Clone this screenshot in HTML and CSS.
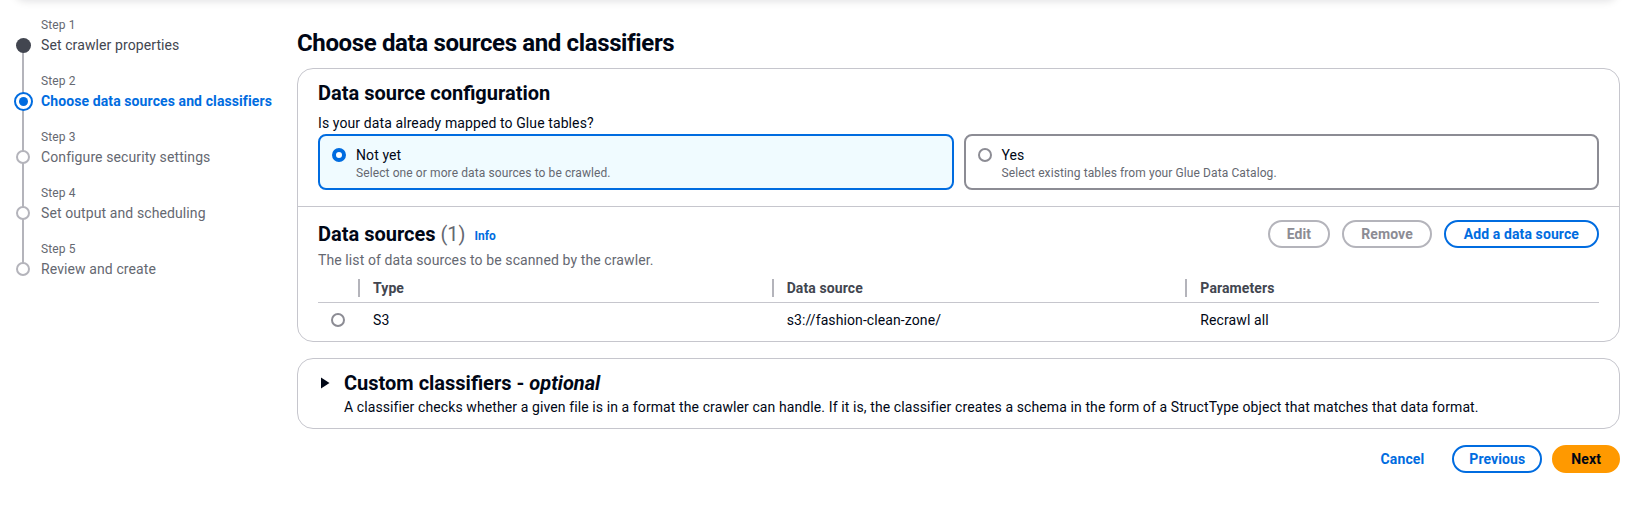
FILE: index.html
```html
<!DOCTYPE html>
<html lang="en">
<head>
<meta charset="utf-8">
<title>Choose data sources and classifiers</title>
<link rel="stylesheet" href="styles.css">
</head>
<body>
<div class="topbar"></div>
<div class="layout">
  <nav class="steps">
    <div class="step step-first">
      <div class="marker"><span class="dot dot-done"></span></div>
      <div class="step-label">Step 1</div>
      <div class="step-title title-done">Set crawler properties</div>
    </div>
    <div class="step">
      <div class="marker"><span class="dot dot-active"><span class="dot-inner"></span></span></div>
      <div class="step-label">Step 2</div>
      <div class="step-title title-active">Choose data sources and classifiers</div>
    </div>
    <div class="step">
      <div class="marker"><span class="dot dot-todo"></span></div>
      <div class="step-label">Step 3</div>
      <div class="step-title">Configure security settings</div>
    </div>
    <div class="step">
      <div class="marker"><span class="dot dot-todo"></span></div>
      <div class="step-label">Step 4</div>
      <div class="step-title">Set output and scheduling</div>
    </div>
    <div class="step step-last">
      <div class="marker"><span class="dot dot-todo"></span></div>
      <div class="step-label">Step 5</div>
      <div class="step-title">Review and create</div>
    </div>
  </nav>

  <main class="main">
    <h1 class="page-title">Choose data sources and classifiers</h1>

    <section class="container">
      <div class="cfg">
        <h2 class="h2">Data source configuration</h2>
        <div class="question">Is your data already mapped to Glue tables?</div>
        <div class="tiles">
          <div class="tile tile-selected">
            <span class="radio radio-on"></span>
            <div class="tile-text">
              <div class="tile-label">Not yet</div>
              <div class="tile-desc">Select one or more data sources to be crawled.</div>
            </div>
          </div>
          <div class="tile">
            <span class="radio"></span>
            <div class="tile-text">
              <div class="tile-label">Yes</div>
              <div class="tile-desc">Select existing tables from your Glue Data Catalog.</div>
            </div>
          </div>
        </div>
      </div>

      <div class="sources">
        <div class="src-head">
          <h2 class="h2">Data sources <span class="count">(1)</span> <a class="info">Info</a></h2>
          <div class="actions">
            <button class="btn btn-disabled">Edit</button>
            <button class="btn btn-disabled">Remove</button>
            <button class="btn btn-normal btn-wide">Add a data source</button>
          </div>
        </div>
        <div class="src-desc">The list of data sources to be scanned by the crawler.</div>
        <div class="table">
          <div class="thead">
            <div class="th th-sel"></div>
            <div class="th">Type</div>
            <div class="th">Data source</div>
            <div class="th">Parameters</div>
          </div>
          <div class="tr">
            <div class="td td-sel"><span class="radio"></span></div>
            <div class="td">S3</div>
            <div class="td">s3://fashion-clean-zone/</div>
            <div class="td">Recrawl all</div>
          </div>
        </div>
      </div>
    </section>

    <section class="container expander">
      <svg class="caret" width="16" height="24" viewBox="0 0 16 24" aria-hidden="true"><polygon points="3,6.5 11.5,12 3,17.5" fill="#000716"/></svg>
      <div class="exp-body">
        <h2 class="h2">Custom classifiers - <em>optional</em></h2>
        <div class="exp-desc">A classifier checks whether a given file is in a format the crawler can handle. If it is, the classifier creates a schema in the form of a StructType object that matches that data format.</div>
      </div>
    </section>

    <div class="footer">
      <button class="btn btn-link">Cancel</button>
      <button class="btn btn-normal btn-prev">Previous</button>
      <button class="btn btn-primary">Next</button>
    </div>
  </main>
</div>
</body>
</html>
```

FILE: styles.css
```css
* { box-sizing: border-box; }

html, body {
  margin: 0;
  padding: 0;
  background: #ffffff;
}

body {
  font-family: Roboto, "Liberation Sans", Arial, sans-serif;
  font-size: 14px;
  line-height: 20px;
  letter-spacing: 0.1px;
  color: #000716;
}

.topbar {
  height: 10px;
  margin: -10px 14px 0 15px;
  background: #ffffff;
  border-radius: 0 0 14px 14px;
  box-shadow: 0 1px 8px rgba(0, 7, 22, 0.13);
}

.layout {
  display: flex;
  align-items: flex-start;
}

/* ---------- steps ---------- */
.steps {
  width: 297px;
  flex-shrink: 0;
  padding: 17px 0 0 15px;
}

.step {
  display: grid;
  grid-template-columns: 16px 1fr;
  grid-template-rows: 18px 20px 18px;
  column-gap: 10px;
}

.marker {
  grid-column: 1;
  grid-row: 1 / 4;
  display: flex;
  align-items: center;
  justify-content: center;
  background: linear-gradient(#b4b4bb, #b4b4bb) center / 2px 100% no-repeat;
}

.step-first .marker {
  background-position: center bottom;
  background-size: 2px 50%;
}

.step-last .marker {
  background-position: center top;
  background-size: 2px 50%;
}

.step-label {
  grid-column: 2;
  grid-row: 1;
  font-size: 12px;
  line-height: 16px;
  color: #656871;
}

.step-title {
  grid-column: 2;
  grid-row: 2;
  font-size: 14px;
  line-height: 20px;
  color: #656871;
  white-space: nowrap;
}

.title-done { color: #424650; }
.title-active { color: #006ce0; font-weight: 700; }

.dot {
  display: block;
  flex-shrink: 0;
  border-radius: 50%;
}

.dot-done {
  width: 15px;
  height: 15px;
  background: #424650;
}

.dot-active {
  width: 19px;
  height: 19px;
  border: 2px solid #006ce0;
  background: #ffffff;
  display: flex;
  align-items: center;
  justify-content: center;
}

.dot-inner {
  width: 9px;
  height: 9px;
  border-radius: 50%;
  background: #006ce0;
}

.dot-todo {
  width: 14px;
  height: 14px;
  border: 2px solid #b4b4bb;
  background: #ffffff;
}

/* ---------- main ---------- */
.main {
  flex: 1;
  min-width: 0;
  padding: 28px 11px 0 0;
}

.page-title {
  margin: 0 0 10px;
  font-size: 24px;
  line-height: 30px;
  font-weight: 700;
  letter-spacing: -0.015em;
  color: #000716;
}

.container {
  border: 1px solid #c6c6cd;
  border-radius: 16px;
  background: #ffffff;
}

.h2 {
  margin: 0;
  font-size: 20px;
  line-height: 24px;
  font-weight: 700;
  letter-spacing: 0;
  color: #000716;
}

.cfg {
  padding: 12px 20px 16px;
}

.cfg .h2 { margin-bottom: 8px; }

.question {
  margin-bottom: 1px;
}

.tiles {
  display: grid;
  grid-template-columns: 1fr 1fr;
  gap: 10px;
}

.tile {
  display: flex;
  gap: 10px;
  border: 2px solid #8c8c94;
  border-radius: 8px;
  padding: 9px 12px 7px;
  background: #ffffff;
}

.tile-selected {
  border-color: #006ce0;
  background: #f0fbff;
}

.tile-label {
  font-size: 14px;
  line-height: 20px;
}

.tile-desc {
  font-size: 12px;
  line-height: 16px;
  color: #656871;
}

.radio {
  display: block;
  flex-shrink: 0;
  width: 14px;
  height: 14px;
  margin-top: 3px;
  border-radius: 50%;
  border: 2px solid #8c8c94;
  background: #ffffff;
}

.radio-on {
  border: 4px solid #006ce0;
}

.sources {
  border-top: 1px solid #c6c6cd;
  padding: 13px 20px 5px;
}

.src-head {
  display: flex;
  justify-content: space-between;
  align-items: center;
}

.count {
  font-weight: 400;
  color: #656871;
}

.info {
  font-size: 12px;
  line-height: 16px;
  font-weight: 700;
  color: #006ce0;
  margin-left: 4px;
  vertical-align: 1px;
}

.actions {
  display: flex;
  gap: 12px;
}

.btn {
  font-family: inherit;
  font-size: 14px;
  line-height: 20px;
  font-weight: 700;
  letter-spacing: 0.1px;
  padding: 2px 17px;
  border-radius: 20px;
  border: 2px solid transparent;
  background: #ffffff;
  cursor: pointer;
}

.btn-wide {
  padding: 2px 18px;
}

.btn-prev {
  padding: 2px 15px;
}

.btn-disabled {
  border-color: #b4b4bb;
  color: #8c8c94;
}

.btn-normal {
  border-color: #006ce0;
  color: #006ce0;
}

.btn-link {
  color: #006ce0;
  padding: 2px 16px;
}

.btn-primary {
  background: #ff9900;
  border-color: #ff9900;
  color: #000716;
  padding: 2px 17px;
}

.src-desc {
  color: #656871;
  margin-top: 2px;
}

.table {
  margin-top: 4px;
}

.thead, .tr {
  display: grid;
  grid-template-columns: 40px repeat(3, 1fr);
}

.thead {
  border-bottom: 1px solid #c6c6cd;
}

.th {
  height: 28px;
  display: flex;
  align-items: center;
  font-weight: 700;
  color: #424650;
}

.th:not(.th-sel)::before {
  content: "";
  display: block;
  width: 2px;
  height: 18px;
  background: #b4b4bb;
  margin-right: 13px;
}

.tr {
  height: 33px;
}

.td {
  display: flex;
  align-items: center;
  padding-left: 15px;
}

.td-sel {
  padding-left: 0;
  justify-content: center;
}

.td-sel .radio { margin-top: 0; }

.expander {
  margin-top: 16px;
  padding: 12px 20px 11px;
  display: flex;
  gap: 10px;
}

.caret {
  flex-shrink: 0;
  display: block;
}

.exp-desc {
  margin-top: 2px;
}

.footer {
  display: flex;
  justify-content: flex-end;
  gap: 10px;
  margin-top: 16px;
}
```
